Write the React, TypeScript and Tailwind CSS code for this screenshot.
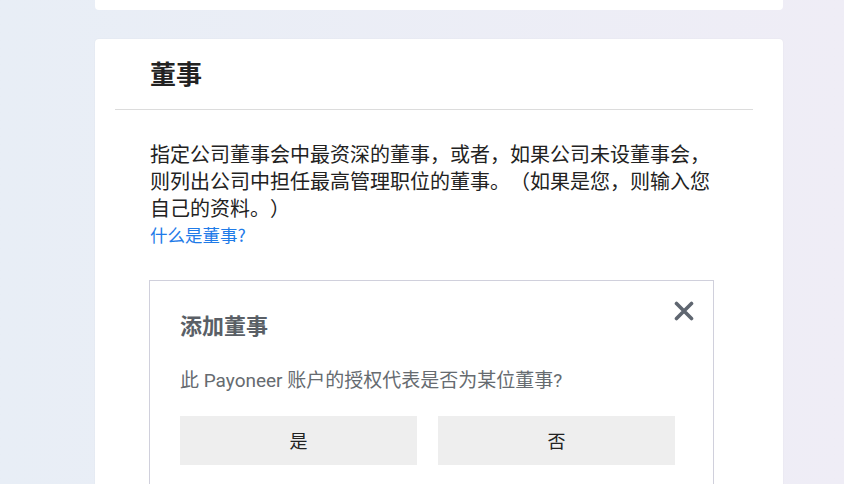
import React from 'react';

const cjk = { fontFamily: '"Noto Sans CJK SC", "Noto Sans", sans-serif' };
const mixed = { fontFamily: 'Roboto, "Noto Sans CJK SC", sans-serif' };

const CloseIcon: React.FC = () => (
    <svg width="20" height="20" viewBox="0 0 20 20" fill="none">
        <path d="M2.5 2.5 17.5 17.5M17.5 2.5 2.5 17.5" stroke="#5f6670" strokeWidth="3.6" strokeLinecap="round" />
    </svg>
);

export default function App() {
    return (
        <div className="h-[484px] w-full overflow-hidden bg-gradient-to-r from-[#e8eef6] to-[#efedf6] [text-spacing-trim:space-all]" style={cjk}>
            {/* previous card, only its bottom edge is visible */}
            <div className="ml-[95px] h-[10px] w-[688px] rounded-b-[4px] bg-white" />

            <div className="ml-[95px] mt-[29px] w-[688px] rounded-[4px] bg-white px-[20px] pt-[15px] pb-10 shadow-[0_0_2px_rgba(0,0,0,0.06)]">
                <h2 className="pl-[35px] text-[26px] font-bold leading-[38px] text-[#222]">董事</h2>
                <div className="mt-[17px] w-[638px] border-t border-[#dcdcdc]" />

                <p className="mt-[30px] ml-[35px] w-[568px] text-[20px] leading-[27px] text-[#222]">
                    指定公司董事会中最资深的董事，或者，如果公司未设董事会，则列出公司中担任最高管理职位的董事。（如果是您，则输入您自己的资料。）
                </p>
                <a href="#" className="ml-[35px] block text-[17.5px] leading-[27px] text-[#1f7be8]">
                    什么是董事?
                </a>

                {/* add director box */}
                <div className="relative ml-[34px] mt-[32px] w-[565px] border border-[#d0d0dc] px-[30px] pt-[27px] pb-10">
                    <button className="absolute right-[19px] top-[20px]">
                        <CloseIcon />
                    </button>
                    <h3 className="text-[22px] font-bold leading-[32px] text-[#5a5f66]">添加董事</h3>
                    <p className="mt-[27px] text-[19px] leading-[28px] text-[#666b70]" style={mixed}>
                        此 Payoneer 账户的授权代表是否为某位董事?
                    </p>
                    <div className="mt-[21px] flex gap-[21px]">
                        <button className="h-[49px] w-[237px] bg-[#eeeeee] text-[18px] text-[#222]">是</button>
                        <button className="h-[49px] w-[237px] bg-[#eeeeee] text-[18px] text-[#222]">否</button>
                    </div>
                </div>
            </div>
        </div>
    );
}
